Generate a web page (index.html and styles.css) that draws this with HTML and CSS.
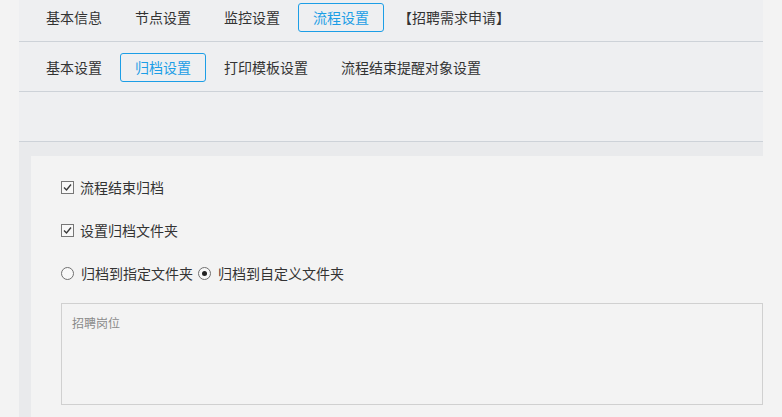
FILE: index.html
```html
<!DOCTYPE html>
<html>
<head>
  <meta charset="utf-8">
  <title>流程设置</title>
  <link rel="stylesheet" href="styles.css">
</head>
<body>
  <div class="page">
    <div class="tabs tabs-main">
      <span class="tab">基本信息</span>
      <span class="tab">节点设置</span>
      <span class="tab">监控设置</span>
      <span class="tab active">流程设置</span>
      <span class="tab title">【招聘需求申请】</span>
    </div>

    <div class="tabs tabs-sub">
      <span class="tab">基本设置</span>
      <span class="tab active">归档设置</span>
      <span class="tab">打印模板设置</span>
      <span class="tab">流程结束提醒对象设置</span>
    </div>

    <div class="toolbar"></div>

    <div class="body-wrap">
      <div class="content">
        <label class="row">
          <span class="checkbox checked">
            <svg width="11" height="11" viewBox="0 0 11 11"><path d="M2 5.5 L4.5 8 L9 2.5" fill="none" stroke="#3a3a3a" stroke-width="1.4"/></svg>
          </span>
          流程结束归档
        </label>

        <label class="row">
          <span class="checkbox checked">
            <svg width="11" height="11" viewBox="0 0 11 11"><path d="M2 5.5 L4.5 8 L9 2.5" fill="none" stroke="#3a3a3a" stroke-width="1.4"/></svg>
          </span>
          设置归档文件夹
        </label>

        <div class="row radios">
          <label class="radio-item"><span class="radio"></span>归档到指定文件夹</label>
          <label class="radio-item"><span class="radio checked"></span>归档到自定义文件夹</label>
        </div>

        <textarea class="folder" placeholder="招聘岗位"></textarea>
      </div>
    </div>
  </div>
</body>
</html>
```

FILE: styles.css
```css
html, body {
  height: 100%;
}

body {
  margin: 0;
  background: #f3f3f3;
  font-family: "Noto Sans CJK SC", "Microsoft YaHei", sans-serif;
  font-size: 14px;
  color: #333;
}

.page {
  margin-left: 19px;
  width: 744px;
  height: 100%;
  display: flex;
  flex-direction: column;
  background: #eeeff1;
}

.tabs {
  display: flex;
  gap: 3px;
  padding: 0 12px;
  border-bottom: 1px solid #cdd2d8;
}

.tabs-main {
  padding-top: 3px;
  padding-bottom: 9px;
}

.tabs-sub {
  padding-top: 11px;
  padding-bottom: 9px;
}

.tab {
  height: 27px;
  line-height: 27px;
  padding: 0 14px;
  border: 1px solid transparent;
  border-radius: 3px;
  white-space: nowrap;
}

.tab.active {
  border-color: #1c9ee6;
  color: #1c9ee6;
}

.tab.title {
  padding-left: 10px;
}

.toolbar {
  height: 49px;
  border-bottom: 1px solid #cdd2d8;
}

.body-wrap {
  flex: 1;
  background: #e9eaec;
  padding: 14px 0 0 12px;
}

.content {
  height: 100%;
  margin-right: -19px;
  padding: 20px 19px 0 30px;
  box-sizing: border-box;
  background: #f3f3f3;
}

.row {
  display: flex;
  align-items: center;
  height: 22px;
  margin-bottom: 21px;
}

.row.radios {
  margin-bottom: 19px;
}

.checkbox {
  width: 11px;
  height: 11px;
  border: 1px solid #777;
  background: #f8f8f8;
  margin-right: 6px;
  display: flex;
}

.radio-item {
  display: flex;
  align-items: center;
  margin-right: 5px;
}

.radio {
  width: 11px;
  height: 11px;
  border: 1px solid #707070;
  border-radius: 50%;
  background: #f8f8f8;
  margin-right: 7px;
  display: flex;
  align-items: center;
  justify-content: center;
}

.radio.checked::after {
  content: "";
  width: 5px;
  height: 5px;
  border-radius: 50%;
  background: #222;
}

textarea.folder {
  display: block;
  width: 100%;
  height: 102px;
  box-sizing: border-box;
  margin: 0;
  padding: 10px 10px;
  border: 1px solid #d0d0d0;
  background: transparent;
  font-family: "Noto Sans CJK SC", "Microsoft YaHei", sans-serif;
  font-size: 12px;
  line-height: 18px;
  resize: none;
  outline: none;
}

textarea.folder::placeholder {
  color: #8a8a8a;
}
```
